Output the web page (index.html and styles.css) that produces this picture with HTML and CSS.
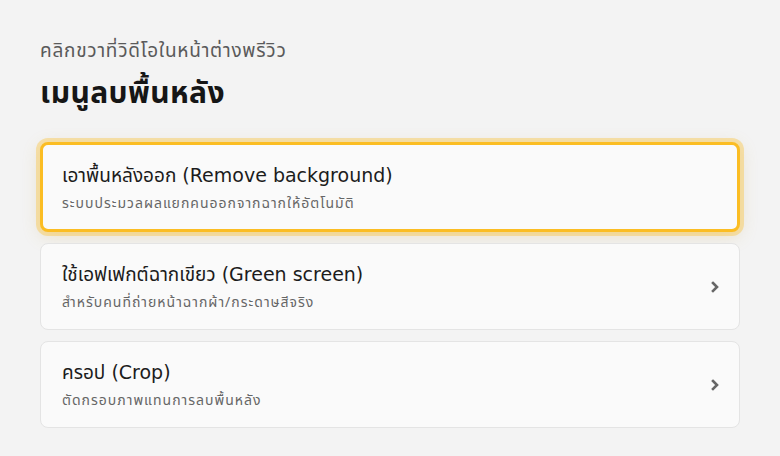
FILE: index.html
```html
<!DOCTYPE html>
<html lang="th">
<head>
  <meta charset="UTF-8">
  <meta name="viewport" content="width=device-width, initial-scale=1">
  <title>เมนูลบพื้นหลัง</title>
  <link rel="stylesheet" href="styles.css">
</head>
<body>

  <div class="panel">
    <p class="hint">คลิกขวาที่วิดีโอในหน้าต่างพรีวิว</p>
    <h1 class="title">เมนูลบพื้นหลัง</h1>

    <div class="menu">
      <div class="item active">
        <div class="text">
          <div class="name">เอาพื้นหลังออก (Remove background)</div>
          <div class="desc">ระบบประมวลผลแยกคนออกจากฉากให้อัตโนมัติ</div>
        </div>
      </div>

      <div class="item">
        <div class="text">
          <div class="name">ใช้เอฟเฟกต์ฉากเขียว (Green screen)</div>
          <div class="desc">สำหรับคนที่ถ่ายหน้าฉากผ้า/กระดาษสีจริง</div>
        </div>
        <svg class="chevron" width="10" height="12" viewBox="0 0 10 12">
          <path d="M3 2 L7 6 L3 10" fill="none" stroke="#666" stroke-width="2.6" stroke-linecap="square"/>
        </svg>
      </div>

      <div class="item">
        <div class="text">
          <div class="name">ครอป (Crop)</div>
          <div class="desc">ตัดกรอบภาพแทนการลบพื้นหลัง</div>
        </div>
        <svg class="chevron" width="10" height="12" viewBox="0 0 10 12">
          <path d="M3 2 L7 6 L3 10" fill="none" stroke="#666" stroke-width="2.6" stroke-linecap="square"/>
        </svg>
      </div>
    </div>
  </div>

</body>
</html>
```

FILE: styles.css
```css
body {
  margin: 0;
  background: #f3f3f3;
  font-family: 'Noto Sans Thai', 'Noto Sans', sans-serif;
  color: #1c1c1c;
}

.panel {
  padding: 39px 40px 0 40px;
}

.hint {
  margin: 0;
  font-size: 19px;
  letter-spacing: 0.75px;
  color: #5a5a5a;
  line-height: 26px;
}

.title {
  margin: 10px 0 0 0;
  font-size: 30px;
  font-weight: 700;
  letter-spacing: 0.4px;
  line-height: 38px;
  color: #161616;
}

.menu {
  margin-top: 29px;
  display: flex;
  flex-direction: column;
  gap: 11px;
}

.item {
  box-sizing: border-box;
  display: flex;
  align-items: center;
  background: #fafafa;
  border: 1px solid #e4e4e4;
  border-radius: 8px;
  padding: 0 19px 0 21px;
  height: 87px;
}

.item.active {
  border: 3px solid #fbbd23;
  padding-left: 19px;
  height: 90px;
  box-shadow: 0 0 0 4px rgba(251, 189, 35, 0.35), 0 4px 18px rgba(200, 160, 60, 0.22);
}

.text {
  flex: 1;
}

.name {
  font-family: 'DejaVu Sans', 'Noto Sans Thai', sans-serif;
  font-size: 19px;
  line-height: 26px;
  color: #1c1c1c;
}

.desc {
  margin-top: 7px;
  font-size: 14px;
  letter-spacing: 1px;
  line-height: 18px;
  color: #666;
}

.chevron {
  display: block;
}
```
